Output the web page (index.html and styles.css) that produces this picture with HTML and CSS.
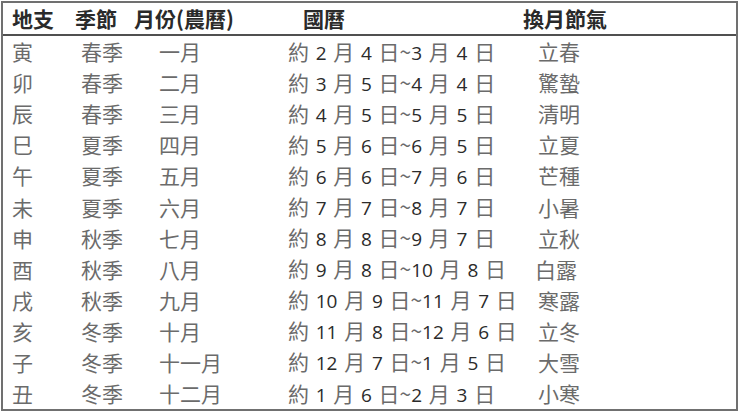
FILE: index.html
```html
<!DOCTYPE html>
<html lang="zh-Hant">
<head>
<meta charset="utf-8">
<link rel="stylesheet" href="styles.css">
</head>
<body>
<div class="table">
  <div class="row head">
    <div class="c1">地支</div><div class="c2">季節</div><div class="c3">月份(農曆)</div><div class="c4">國曆</div><div class="c5">換月節氣</div>
  </div>
  <div class="row"><div class="c1">寅</div><div class="c2">春季</div><div class="c3">一月</div><div class="c4">約 <span class="n">2</span> 月 <span class="n">4</span> 日~<span class="n">3</span> 月 <span class="n">4</span> 日</div><div class="c5">立春</div></div>
  <div class="row"><div class="c1">卯</div><div class="c2">春季</div><div class="c3">二月</div><div class="c4">約 <span class="n">3</span> 月 <span class="n">5</span> 日~<span class="n">4</span> 月 <span class="n">4</span> 日</div><div class="c5">驚蟄</div></div>
  <div class="row"><div class="c1">辰</div><div class="c2">春季</div><div class="c3">三月</div><div class="c4">約 <span class="n">4</span> 月 <span class="n">5</span> 日~<span class="n">5</span> 月 <span class="n">5</span> 日</div><div class="c5">清明</div></div>
  <div class="row"><div class="c1">巳</div><div class="c2">夏季</div><div class="c3">四月</div><div class="c4">約 <span class="n">5</span> 月 <span class="n">6</span> 日~<span class="n">6</span> 月 <span class="n">5</span> 日</div><div class="c5">立夏</div></div>
  <div class="row"><div class="c1">午</div><div class="c2">夏季</div><div class="c3">五月</div><div class="c4">約 <span class="n">6</span> 月 <span class="n">6</span> 日~<span class="n">7</span> 月 <span class="n">6</span> 日</div><div class="c5">芒種</div></div>
  <div class="row"><div class="c1">未</div><div class="c2">夏季</div><div class="c3">六月</div><div class="c4">約 <span class="n">7</span> 月 <span class="n">7</span> 日~<span class="n">8</span> 月 <span class="n">7</span> 日</div><div class="c5">小暑</div></div>
  <div class="row"><div class="c1">申</div><div class="c2">秋季</div><div class="c3">七月</div><div class="c4">約 <span class="n">8</span> 月 <span class="n">8</span> 日~<span class="n">9</span> 月 <span class="n">7</span> 日</div><div class="c5">立秋</div></div>
  <div class="row"><div class="c1">酉</div><div class="c2">秋季</div><div class="c3">八月</div><div class="c4">約 <span class="n">9</span> 月 <span class="n">8</span> 日~<span class="n">10</span> 月 <span class="n">8</span> 日</div><div class="c5 shift">白露</div></div>
  <div class="row"><div class="c1">戌</div><div class="c2">秋季</div><div class="c3">九月</div><div class="c4">約 <span class="n">10</span> 月 <span class="n">9</span> 日~<span class="n">11</span> 月 <span class="n">7</span> 日</div><div class="c5">寒露</div></div>
  <div class="row"><div class="c1">亥</div><div class="c2">冬季</div><div class="c3">十月</div><div class="c4">約 <span class="n">11</span> 月 <span class="n">8</span> 日~<span class="n">12</span> 月 <span class="n">6</span> 日</div><div class="c5">立冬</div></div>
  <div class="row"><div class="c1">子</div><div class="c2">冬季</div><div class="c3">十一月</div><div class="c4">約 <span class="n">12</span> 月 <span class="n">7</span> 日~<span class="n">1</span> 月 <span class="n">5</span> 日</div><div class="c5">大雪</div></div>
  <div class="row"><div class="c1">丑</div><div class="c2">冬季</div><div class="c3">十二月</div><div class="c4">約 <span class="n">1</span> 月 <span class="n">6</span> 日~<span class="n">2</span> 月 <span class="n">3</span> 日</div><div class="c5">小寒</div></div>
</div>
</body>
</html>
```
FILE: styles.css
```css
html, body {
  margin: 0;
  padding: 0;
  background: #fff;
}
body {
  font-family: "Noto Sans CJK TC", sans-serif;
}
.table {
  margin: 1px 2px 2px 1px;
  width: 733px;
  border: 2px solid #707070;
  background: #fff;
}
.row {
  display: grid;
  grid-template-columns: 69px 58px 140px 250px 216px;
  height: 31.1px;
  align-items: center;
  font-size: 21px;
  line-height: 1;
  color: #6b6b6b;
  white-space: nowrap;
}
.row.head {
  height: 31px;
  border-bottom: 2px solid #505050;
  color: #2a2a2a;
  font-weight: 700;
  font-size: 21px;
}
.c1 { padding-left: 9px; }
.c2 { padding-left: 9px; }
.c3 { padding-left: 29px; }
.c4 { padding-left: 18px; word-spacing: 2px; }
.c5 { padding-left: 18px; }
.head .c2 { padding-left: 3px; }
.head .c3 { padding-left: 4px; }
.head .c4 { padding-left: 33px; word-spacing: 0; }
.head .c5 { padding-left: 3px; }
.c5.shift { padding-left: 15px; }
.n {
  font-family: "Open Sans", sans-serif;
  color: #2b2b2b;
  font-size: 19px;
  word-spacing: 0;
}
```
